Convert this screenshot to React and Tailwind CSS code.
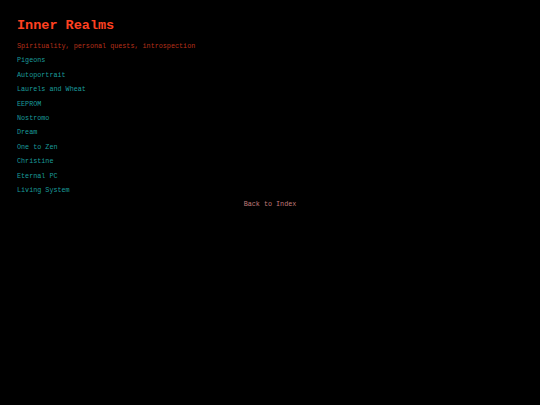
const links = [
  'Pigeons',
  'Autoportrait',
  'Laurels and Wheat',
  'EEPROM',
  'Nostromo',
  'Dream',
  'One to Zen',
  'Christine',
  'Eternal PC',
  'Living System',
]

export default function App() {
  return (
    <div className="min-h-[405px] w-full bg-black px-[17px] pt-[17px] font-['Liberation_Mono',monospace]">
      <h1 className="text-[13.5px] font-bold leading-[18px] text-[#ff4020]">Inner Realms</h1>
      <p className="mt-[7px] text-[6.75px] leading-[9px] text-[#b8301a]">
        Spirituality, personal quests, introspection
      </p>
      <ul className="mt-[2.4px] flex flex-col">
        {links.map((name) => (
          <li key={name} className="h-[14.4px] text-[6.75px] leading-[14.4px] text-[#1a9c9c]">
            {name}
          </li>
        ))}
      </ul>
      <div className="text-center text-[6.75px] leading-[14.4px] text-[#c07c7c]">Back to Index</div>
    </div>
  )
}
